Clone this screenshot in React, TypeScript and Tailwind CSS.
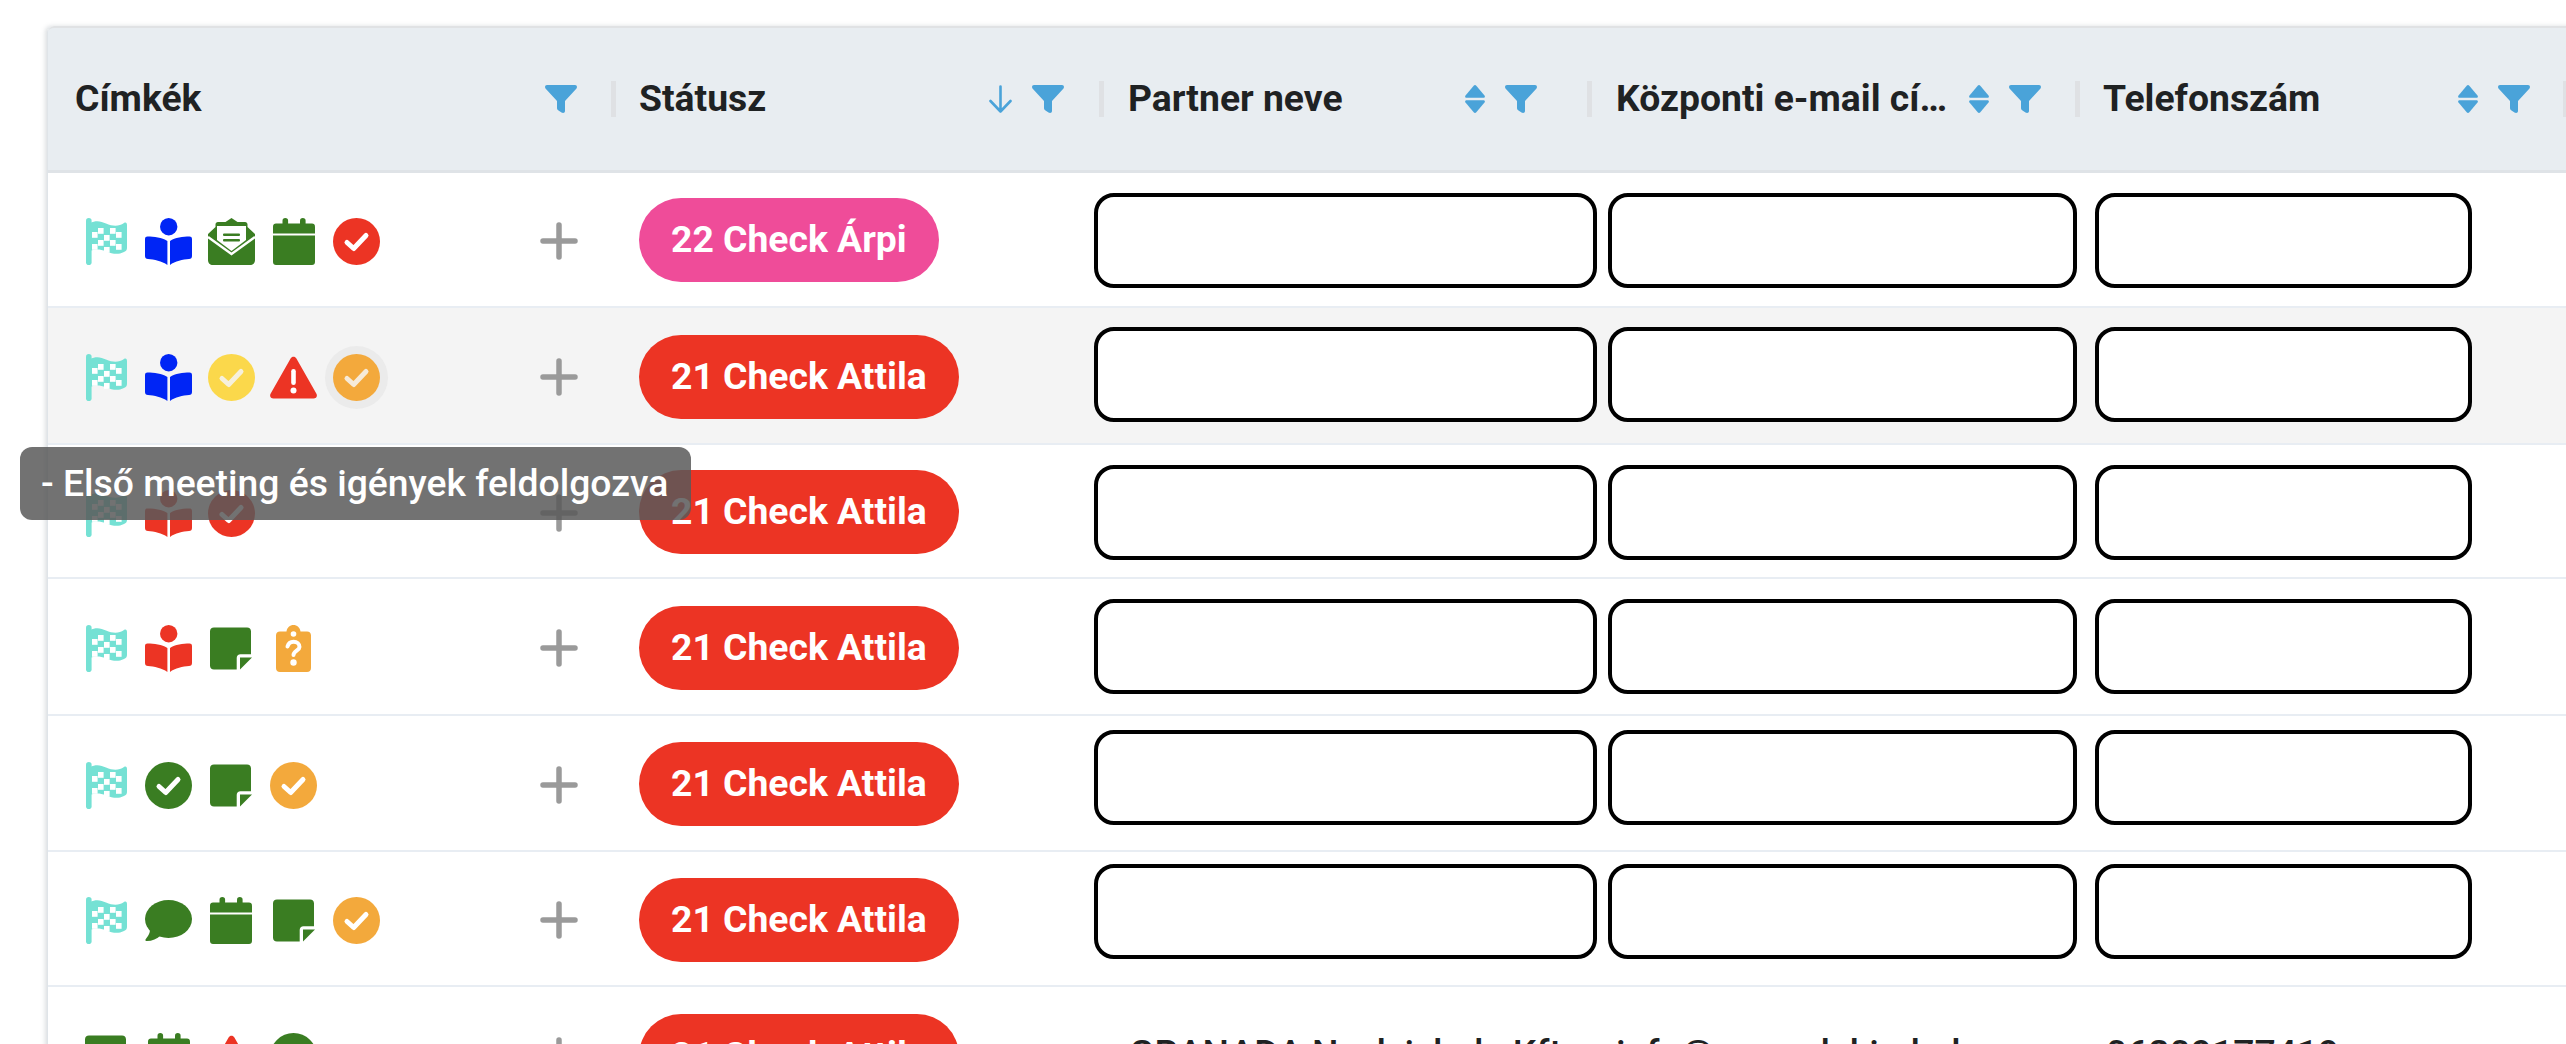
import type { ReactNode } from "react";

const font = { fontFamily: "Roboto, sans-serif" };

function Flag() {
  const cells: ReactNode[] = [];
  for (let row = 0; row < 4; row++) {
    for (let col = 0; col < 5; col++) {
      if ((row + col) % 2 !== 1) continue;
      const wave = [0, 2, 3, 2, 0][col];
      cells.push(
        <rect key={`${row}-${col}`} x={6 + col * 6} y={8 + row * 6 + wave} width={5.6} height={5.8} fill="#fff" />,
      );
    }
  }
  return (
    <svg width="41" height="47" viewBox="0 0 41 47" className="fill-[#75e1d4]">
      <rect x="0" y="0" width="5.6" height="47" rx="2.8" />
      <path d="M4 5C10 2 15 3 20 5.5C27 8.5 33 8.5 38 5C40 4 41 5 41 7V30C41 32 40 33 38 34C32 37 27 36 20 33.5C14 31 9 31 4 33Z" />
      {cells}
    </svg>
  );
}

function Reader({ className }: { className: string }) {
  return (
    <svg width="47" height="47" viewBox="0 0 47 47" className={className}>
      <circle cx="23.7" cy="8.7" r="8.7" />
      <path d="M2.5 18.5C9 18.5 17 19.5 22.4 23V47C17 43 9 41.5 3 41C1 41 0 39.8 0 38V21C0 19.3 1 18.5 2.5 18.5Z" />
      <path d="M44.5 18.5C38 18.5 30 19.5 25 23V47C30 43 38 41.5 44 41C46 41 47 39.8 47 38V21C47 19.3 46 18.5 44.5 18.5Z" />
    </svg>
  );
}

function Mail() {
  return (
    <svg width="47" height="47" viewBox="0 0 47 47" className="fill-[#3a7d22]">
      <path d="M23.5 0L29.5 4H37C38.5 4 39.5 5 39.5 6.5V9L47 16V42C47 45 45 47 42 47H5C2 47 0 45 0 42V16L7.5 9V6.5C7.5 5 8.5 4 10 4H17.5Z" />
      <path d="M9 8H38V22L23.5 33L9 22Z" fill="#fff" />
      <path d="M0 19L23.5 36L47 19" fill="none" stroke="#fff" strokeWidth="2.4" />
      <rect x="15" y="15.5" width="17" height="2.6" rx="1" />
      <rect x="15" y="21" width="17" height="2.6" rx="1" />
    </svg>
  );
}

function Calendar() {
  return (
    <svg width="42" height="47" viewBox="0 0 42 47" className="fill-[#3a7d22]">
      <rect x="9.5" y="0" width="5.6" height="10" rx="2.8" />
      <rect x="27" y="0" width="5.6" height="10" rx="2.8" />
      <path d="M3 5.5H39C40.8 5.5 42 6.7 42 8.5V15.5H0V8.5C0 6.7 1.2 5.5 3 5.5Z" />
      <path d="M0 17.5H42V44C42 45.8 40.8 47 39 47H3C1.2 47 0 45.8 0 44Z" />
    </svg>
  );
}

function Check({ className, tick = "#fff" }: { className: string; tick?: string }) {
  return (
    <svg width="47" height="47" viewBox="0 0 47 47" className={className}>
      <circle cx="23.5" cy="23.5" r="23.5" />
      <path d="M14 24.5L20.7 30.5L33 17.5" fill="none" stroke={tick} strokeWidth="5" strokeLinecap="round" strokeLinejoin="round" />
    </svg>
  );
}

function Warning() {
  return (
    <svg width="47" height="47" viewBox="0 0 47 47" className="fill-[#ec3424]">
      <path d="M20.6 4.5C22 2 25 2 26.4 4.5L46.3 39.5C47.8 42 46.3 44.5 43.5 44.5H3.5C0.7 44.5 -0.8 42 0.7 39.5Z" />
      <rect x="21.2" y="15" width="4.6" height="16" rx="2.3" fill="#fff" />
      <circle cx="23.5" cy="36.5" r="3" fill="#fff" />
    </svg>
  );
}

function Note() {
  return (
    <svg width="42" height="47" viewBox="0 -2.5 42 47" className="fill-[#3a7d22]">
      <path d="M4 0H37C39.5 0 41 1.5 41 4V26.7H30.5C28.3 26.7 26.7 28.3 26.7 30.5V42H4C1.5 42 0 40.5 0 38V4C0 1.5 1.5 0 4 0Z" />
      <path d="M30 42V30H42Z" />
    </svg>
  );
}

function Clipboard() {
  return (
    <svg width="36" height="47" viewBox="0 0 36 47" className="fill-[#f3a93c]">
      <path d="M10.5 6.5C11 2.5 14 0 17.5 0C21 0 24 2.5 24.5 6.5H31C33.5 6.5 35 8 35 10.5V43C35 45.5 33.5 47 31 47H4C1.5 47 0 45.5 0 43V10.5C0 8 1.5 6.5 4 6.5Z" />
      <circle cx="17.5" cy="9" r="2.8" fill="#fff" />
      <path d="M11.5 21.5C12.5 18 15 16.7 17.5 16.7C21 16.7 23.5 19 23.5 22C23.5 25.5 17.5 26 17.5 30" fill="none" stroke="#fff" strokeWidth="4" strokeLinecap="round" />
      <circle cx="17.5" cy="37.5" r="3.2" fill="#fff" />
    </svg>
  );
}

function Bubble() {
  return (
    <svg width="47" height="47" viewBox="0 0 47 47" className="fill-[#3a7d22]">
      <ellipse cx="23.5" cy="22" rx="23.5" ry="19" />
      <path d="M5 32C5 37 3 39 0.5 42.5C0 43.6 1 44 2 44C7 44 12 42 16 38Z" />
    </svg>
  );
}

function Funnel() {
  return (
    <svg width="32" height="28" viewBox="0 0 32 28" className="fill-[#4aa3d9]">
      <path d="M2 0H30C31.8 0 32.5 2 31.5 3.5L20 16V26C20 28 18 28.5 16.5 27.5L13.5 25.5C12.5 25 12 24 12 23V16L0.5 3.5C-0.5 2 0.2 0 2 0Z" />
    </svg>
  );
}

function SortBoth() {
  return (
    <svg width="20" height="28" viewBox="0 0 20 28" className="fill-[#4aa3d9]">
      <path d="M8.7 0.7C9.4 -0.1 10.6 -0.1 11.3 0.7L19.5 10.5C20.3 11.5 19.8 12.8 18.5 12.8H1.5C0.2 12.8 -0.3 11.5 0.5 10.5Z" />
      <path d="M8.7 27.3C9.4 28.1 10.6 28.1 11.3 27.3L19.5 17.5C20.3 16.5 19.8 15.2 18.5 15.2H1.5C0.2 15.2 -0.3 16.5 0.5 17.5Z" />
    </svg>
  );
}

function SortDown() {
  return (
    <svg width="23" height="28" viewBox="0 0 23 28" fill="none" stroke="#4aa3d9" strokeWidth="2.6" strokeLinecap="round" strokeLinejoin="round">
      <path d="M11.5 1.5V26.5M1.5 16L11.5 26.5L21.5 16" />
    </svg>
  );
}

function Plus() {
  return (
    <svg width="38" height="38" viewBox="0 0 38 38" stroke="#9a9a9a" strokeWidth="5.5" strokeLinecap="round">
      <path d="M19 3V35M3 19H35" />
    </svg>
  );
}

const red = "fill-[#ec3424]";
const green = "fill-[#3a7d22]";
const orange = "fill-[#f3a93c]";
const blue = "fill-[#0025f5]";

const rows = [
  {
    height: "h-[135px]",
    inputTop: "mt-[20px]",
    status: "22 Check Árpi",
    pill: "bg-[#ef4c99] -translate-y-px",
    icons: [<Flag />, <Reader className={blue} />, <Mail />, <Calendar />, <Check className={red} />],
  },
  {
    height: "h-[137px] bg-[#f4f4f4]",
    inputTop: "mt-[19px]",
    status: "21 Check Attila",
    pill: "bg-[#ec3424]",
    icons: [
      <Flag />,
      <Reader className={blue} />,
      <Check className="fill-[#fbd84b]" tick="#f6f0dc" />,
      <Warning />,
      <span className="relative flex">
        <span className="absolute -top-[8px] -left-[8px] h-[63px] w-[63px] rounded-full bg-[#ebebeb]" />
        <span className="relative flex">
          <Check className={orange} tick="#f6ead8" />
        </span>
      </span>,
    ],
  },
  {
    height: "h-[134px]",
    inputTop: "mt-[20px]",
    status: "21 Check Attila",
    pill: "bg-[#ec3424]",
    icons: [<Flag />, <Reader className={red} />, <Check className={red} />],
  },
  {
    height: "h-[137px]",
    inputTop: "mt-[20px]",
    status: "21 Check Attila",
    pill: "bg-[#ec3424]",
    icons: [<Flag />, <Reader className={red} />, <Note />, <Clipboard />],
  },
  {
    height: "h-[136px]",
    inputTop: "mt-[14px]",
    status: "21 Check Attila",
    pill: "bg-[#ec3424]",
    icons: [<Flag />, <Check className={green} />, <Note />, <Check className={orange} />],
  },
  {
    height: "h-[135px]",
    inputTop: "mt-[12px]",
    status: "21 Check Attila",
    pill: "bg-[#ec3424]",
    icons: [<Flag />, <Bubble />, <Calendar />, <Note />, <Check className={orange} />],
  },
];

function TagsCell({ icons }: { icons: ReactNode[] }) {
  return (
    <div className="flex items-center justify-between pr-[33px] pl-[27px]">
      <div className="mt-1 flex items-center">
        {icons.map((icon, i) => (
          <span key={i} className="flex w-[62.5px] justify-center">
            {icon}
          </span>
        ))}
      </div>
      <span className="mt-[3px] flex">
        <Plus />
      </span>
    </div>
  );
}

function Pill({ label, color }: { label: string; color: string }) {
  return (
    <span className={`mt-[2px] inline-flex h-[84px] items-center rounded-full px-[32px] text-[37.3px] font-bold text-white ${color}`}>
      {label}
    </span>
  );
}

function HeaderCell({
  title,
  sort,
  pad,
  titleClass = "",
}: {
  title: string;
  sort?: ReactNode;
  pad: string;
  titleClass?: string;
}) {
  return (
    <div className="flex items-center">
      <div className={`flex w-full min-w-0 items-center ${pad}`}>
        <span className={`min-w-0 flex-1 truncate ${titleClass}`}>{title}</span>
        {sort && <span className="mr-[20px] flex">{sort}</span>}
        <span className="flex">
          <Funnel />
        </span>
      </div>
      <span className="h-[36px] w-[5px] shrink-0 bg-[#dfe1e4]" />
    </div>
  );
}

export default function App() {
  return (
    <div className="relative h-[1044px] w-full overflow-hidden bg-white pt-[26px] pl-[47px]" style={font}>
      <div className="w-[2600px] rounded-tl-[6px] border-l border-[#dfe4e8] shadow-[-2px_0_4px_rgba(120,130,140,0.25)]">
        {/* header */}
        <div className="grid h-[147px] grid-cols-[568px_488px_488px_488px_488px] rounded-tl-[6px] border-t-2 border-b-[3px] border-t-[#e0e2e4] border-b-[#dfe3e7] bg-[#e8edf1] text-[37.3px] font-bold text-[#1f2223]">
          <HeaderCell title="Címkék" pad="pl-[27px] pr-[34px]" />
          <HeaderCell title="Státusz" sort={<SortDown />} pad="pl-[23px] pr-[35px]" />
          <HeaderCell title="Partner neve" sort={<SortBoth />} pad="pl-[24px] pr-[50px]" />
          <HeaderCell
            title="Központi e-mail címe"
            sort={<SortBoth />}
            pad="pl-[24px] pr-[34px]"
            titleClass="pr-[14px]"
          />
          <HeaderCell title="Telefonszám" sort={<SortBoth />} pad="pl-[23px] pr-[33px]" />
        </div>

        {/* rows */}
        {rows.map((row, i) => (
          <div
            key={i}
            className={`grid grid-cols-[563px_483px_514px_487px_1fr] items-center border-b-2 border-[#e8edf3] ${row.height}`}
          >
            <TagsCell icons={row.icons} />
            <div className="pl-[28px]">
              <Pill label={row.status} color={row.pill} />
            </div>
            <input className={`h-[95px] w-[503px] self-start rounded-[20px] border-4 border-black bg-white ${row.inputTop}`} />
            <input className={`h-[95px] w-[469px] self-start rounded-[20px] border-4 border-black bg-white ${row.inputTop}`} />
            <input className={`h-[95px] w-[377px] self-start rounded-[20px] border-4 border-black bg-white ${row.inputTop}`} />
          </div>
        ))}
        <div className="grid h-[135px] grid-cols-[563px_483px_514px_487px_1fr] items-center">
          <TagsCell icons={[<Note />, <Calendar />, <Warning />, <Check className={green} />]} />
          <div className="pl-[28px]">
            <Pill label="21 Check Attila" color="bg-[#ec3424]" />
          </div>
          <div className="-mt-[2px] pl-[35px] text-[37.3px] font-medium text-[#1f2223]">GRANADA Nyelviskola Kft</div>
          <div className="-mt-[2px] pl-[8px] text-[37.3px] font-medium text-[#1f2223]">info@granadakiado.hu</div>
          <div className="-mt-[2px] pl-[11px] text-[37.3px] font-medium text-[#1f2223]">06209177419</div>
        </div>
      </div>

      {/* tooltip */}
      <div className="absolute top-[447px] left-[20px] flex h-[73px] w-[671px] items-center rounded-[12px] bg-[#595959]/85 pl-[21px] text-[37.3px] font-medium whitespace-nowrap text-white">
        - Első meeting és igények feldolgozva
      </div>
    </div>
  );
}
